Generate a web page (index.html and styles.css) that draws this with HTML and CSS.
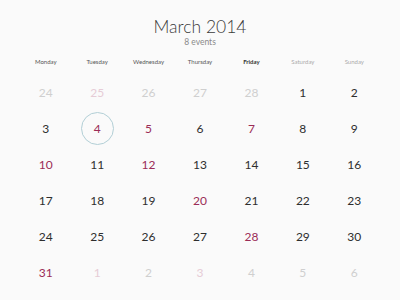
FILE: index.html
```html
<!DOCTYPE html>
<html>
<head>
<meta charset="utf-8">
<link rel="stylesheet" href="styles.css">
</head>
<body>
<div class="cal">
  <div class="head">
    <div class="title">March 2014</div>
    <div class="sub">8 events</div>
  </div>
  <div class="grid">
    <div class="wd">Monday</div>
    <div class="wd">Tuesday</div>
    <div class="wd">Wednesday</div>
    <div class="wd">Thursday</div>
    <div class="wd fri">Friday</div>
    <div class="wd we">Saturday</div>
    <div class="wd we">Sunday</div>

    <div class="d out">24</div>
    <div class="d out ev">25</div>
    <div class="d out">26</div>
    <div class="d out">27</div>
    <div class="d out">28</div>
    <div class="d">1</div>
    <div class="d">2</div>

    <div class="d">3</div>
    <div class="d ev today"><span class="ring">4</span></div>
    <div class="d ev">5</div>
    <div class="d">6</div>
    <div class="d ev">7</div>
    <div class="d">8</div>
    <div class="d">9</div>

    <div class="d ev">10</div>
    <div class="d">11</div>
    <div class="d ev">12</div>
    <div class="d">13</div>
    <div class="d">14</div>
    <div class="d">15</div>
    <div class="d">16</div>

    <div class="d">17</div>
    <div class="d">18</div>
    <div class="d">19</div>
    <div class="d ev">20</div>
    <div class="d">21</div>
    <div class="d">22</div>
    <div class="d">23</div>

    <div class="d">24</div>
    <div class="d">25</div>
    <div class="d">26</div>
    <div class="d">27</div>
    <div class="d ev">28</div>
    <div class="d">29</div>
    <div class="d">30</div>

    <div class="d ev">31</div>
    <div class="d out ev">1</div>
    <div class="d out">2</div>
    <div class="d out ev">3</div>
    <div class="d out">4</div>
    <div class="d out">5</div>
    <div class="d out">6</div>
  </div>
</div>
</body>
</html>
```
FILE: styles.css
```css
html, body {
  margin: 0;
  padding: 0;
  background: #fafafa;
}
body {
  font-family: Lato, "Open Sans", sans-serif;
  color: #333;
  width: 400px;
  height: 300px;
  overflow: hidden;
}
.head {
  padding-top: 16px;
  text-align: center;
}
.title {
  font-size: 17.5px;
  line-height: 22px;
  font-weight: 300;
  color: #3a3a3a;
}
.sub {
  font-size: 8.5px;
  line-height: 10px;
  margin-top: -1px;
  color: #8a8a8a;
}
.grid {
  width: 360px;
  margin: 10px 0 0 20px;
  display: grid;
  grid-template-columns: repeat(7, 1fr);
  grid-auto-rows: 36px;
  grid-template-rows: 17px;
}
.wd {
  font-size: 6px;
  line-height: 10px;
  text-align: center;
  color: #555;
}
.wd.fri { color: #333; font-weight: 700; }
.wd.we { color: #aaa; }
.d {
  display: flex;
  align-items: center;
  justify-content: center;
  font-size: 12px;
  color: #2e2e2e;
}
.d.ev { color: #9b2c57; }
.d.out { color: #cfcfcf; }
.d.out.ev { color: #e6ccd6; }
.ring {
  width: 31px;
  height: 31px;
  border: 1px solid #b2cfd6;
  border-radius: 50%;
  display: flex;
  align-items: center;
  justify-content: center;
}
```
